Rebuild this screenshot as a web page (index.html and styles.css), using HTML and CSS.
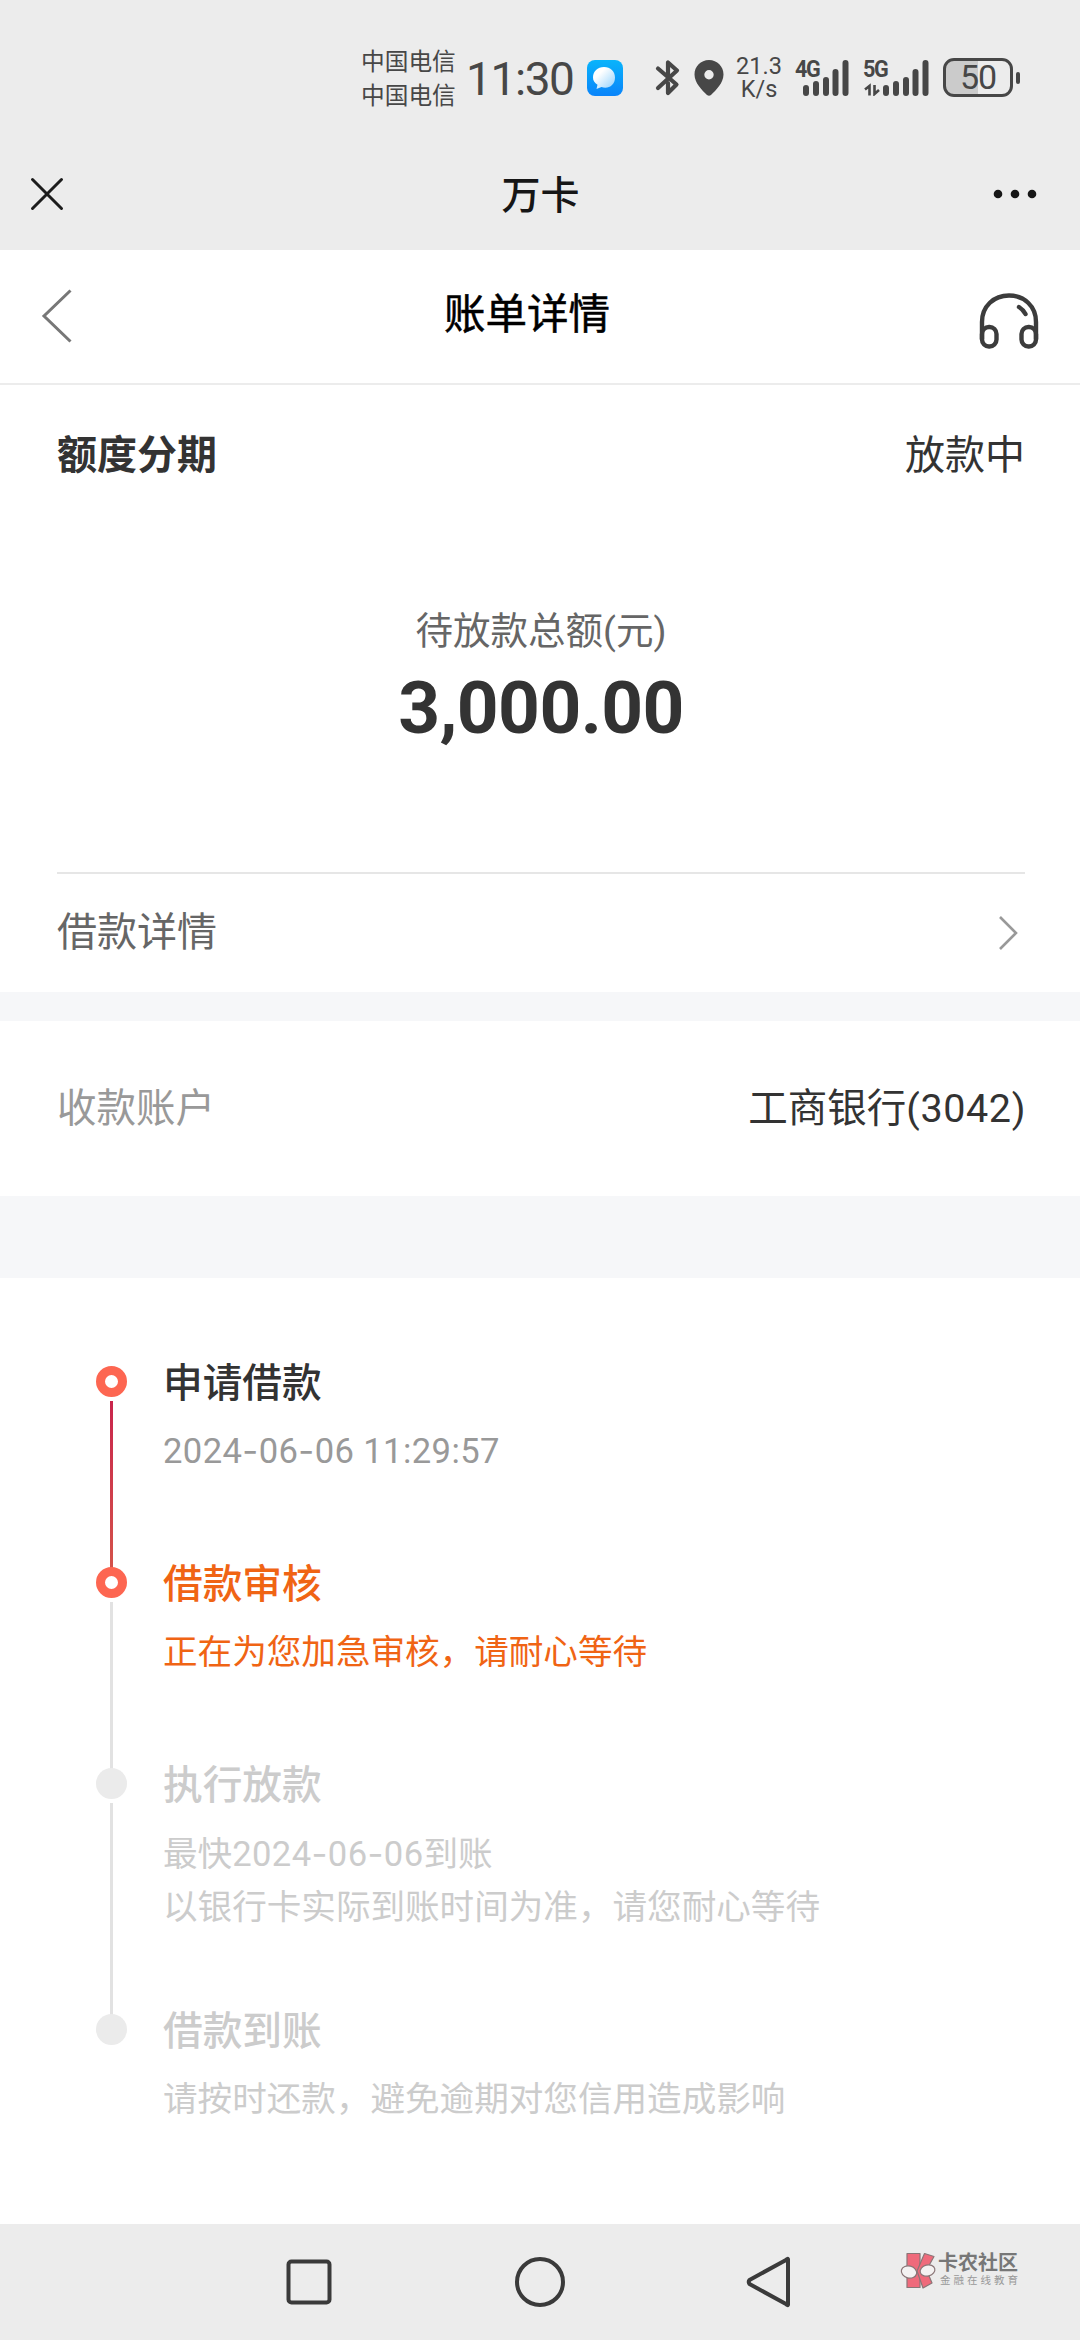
FILE: index.html
```html
<!DOCTYPE html>
<html lang="zh-CN">
<head>
<meta charset="utf-8">
<title>账单详情</title>
<link rel="stylesheet" href="styles.css">
</head>
<body>
<div class="screen">
  <header class="status">
    <div class="carriers"><span>中国电信</span><span>中国电信</span></div>
    <div class="clock">11:30</div>
    <svg class="chat" width="36" height="36" viewBox="0 0 36 36">
      <defs>
        <linearGradient id="sky" x1="0" y1="0" x2="0" y2="1"><stop offset="0" stop-color="#09b4fb"/><stop offset="1" stop-color="#0a84fa"/></linearGradient>
        <linearGradient id="bub" x1="0" y1="0" x2="1" y2="1"><stop offset="0.3" stop-color="#fff"/><stop offset="1" stop-color="#8fd0fd"/></linearGradient>
      </defs>
      <rect width="36" height="36" rx="8" fill="url(#sky)"/>
      <path d="M17 7c6.500 0 11 4.600 11 10.500 0 3-1 5.500-3 7.500-2.500 2.800-7 3.300-10.500 2L9.500 29l1-4.300C7.500 23 6 20.500 6 17.500 6 11.600 10.500 7 17 7z" fill="url(#bub)"/>
    </svg>
    <svg class="bluetooth" width="26" height="38" viewBox="0 0 26 38" fill="none" stroke="#474747" stroke-width="4.200" stroke-linejoin="round" stroke-linecap="round">
      <path d="M3 9.500 21.500 25.500 13 34V24M3 29 22 11.500 13 3.500V16"/>
    </svg>
    <svg class="pin" width="30" height="36" viewBox="0 0 30 36"><path fill="#474747" fill-rule="evenodd" d="M15 0c8.300 0 14.500 6.500 14.500 14.500C29.500 23 22 30 17 35q-2 1.500-4 0C8 30 .5 23 .5 14.500.5 6.500 6.700 0 15 0zm0 10a4.700 4.700 0 1 0 0 9.400 4.700 4.700 0 0 0 0-9.400z"/></svg>
    <div class="speed"><span>21.3</span><span>K/s</span></div>
    <div class="signal first">
      <span class="net">4G</span>
      <svg width="54" height="36" viewBox="0 0 54 36" stroke="#474747" stroke-width="6" stroke-linecap="round"><path d="M11 28v5M21 24v9M31 20v13M40.500 12v21M50.500 3v30"/></svg>
    </div>
    <div class="signal second">
      <span class="net">5G</span>
      <svg width="66" height="36" viewBox="0 0 66 36" stroke="#474747" stroke-width="6" stroke-linecap="round"><path d="M23 28v5M33 24v9M43 20v13M52.500 12v21M62.500 3v30"/><path d="M2 29.500 6.500 26v9.500M11.500 25v9L16 30" fill="none" stroke-width="2.600" stroke-linecap="butt"/></svg>
    </div>
    <div class="battery"><span>50</span></div><i class="nub"></i>
  </header>

  <div class="titlebar">
    <svg width="34" height="34" viewBox="0 0 34 34" stroke="#1c1c1c" stroke-width="3" stroke-linecap="round"><path d="M2.500 2.500l29 29M31.500 2.500l-29 29"/></svg>
    <h1>万卡</h1>
    <svg width="44" height="10" viewBox="0 0 44 10" fill="#161616"><circle cx="5" cy="5" r="4.300"/><circle cx="22" cy="5" r="4.300"/><circle cx="39" cy="5" r="4.300"/></svg>
  </div>

  <nav class="navbar">
    <svg class="back" width="32" height="54" viewBox="0 0 32 54" fill="none" stroke="#777" stroke-width="3"><path d="M29.500 1.500 3 27l26.500 25.500"/></svg>
    <h2>账单详情</h2>
    <svg class="support" width="60" height="56" viewBox="0 0 60 56" fill="none" stroke="#3c3c3c" stroke-width="4.400" stroke-linecap="round">
      <path d="M3 46V29C3 13 15 2.500 30 2.500S57 13 57 29v17"/>
      <rect x="3" y="34" width="14.500" height="19.500" rx="7"/><rect x="42.500" y="34" width="14.500" height="19.500" rx="7"/>
      <path d="M40 14q4 2.500 6.500 7"/>
    </svg>
  </nav>

  <section class="summary">
    <div class="row"><strong>额度分期</strong><span>放款中</span></div>
    <p class="label">待放款总额(元)</p>
    <p class="amount">3,000.00</p>
    <div class="detail"><span>借款详情</span>
      <svg width="22" height="36" viewBox="0 0 22 36" fill="none" stroke="#999" stroke-width="2.600"><path d="M2 2l16 16L2 34"/></svg>
    </div>
  </section>

  <section class="account"><span>收款账户</span><span class="bank">工商银行<span class="digits">(3042)</span></span></section>

  <ol class="timeline">
    <li class="done"><div class="rail"><i class="dot"></i><i class="line"></i></div>
      <div class="body"><h3>申请借款</h3><p class="time">2024<b>-</b>06<b>-</b>06 11:29:57</p></div></li>
    <li class="active"><div class="rail"><i class="dot"></i><i class="line"></i></div>
      <div class="body"><h3>借款审核</h3><p>正在为您加急审核，请耐心等待</p></div></li>
    <li class="todo tall"><div class="rail"><i class="dot"></i><i class="line"></i></div>
      <div class="body"><h3>执行放款</h3><p>最快<span class="time">2024<b>-</b>06<b>-</b>06</span>到账</p><p>以银行卡实际到账时间为准，请您耐心等待</p></div></li>
    <li class="todo"><div class="rail"><i class="dot"></i></div>
      <div class="body"><h3>借款到账</h3><p>请按时还款，避免逾期对您信用造成影响</p></div></li>
  </ol>

  <footer class="softkeys">
    <svg width="46" height="46" viewBox="0 0 46 46" fill="none" stroke="#3a3a3a" stroke-width="4"><rect x="2.500" y="2.500" width="41" height="41" rx="3"/></svg>
    <svg width="52" height="52" viewBox="0 0 52 52" fill="none" stroke="#3a3a3a" stroke-width="4"><circle cx="26" cy="26" r="23"/></svg>
    <svg width="46" height="52" viewBox="0 0 46 52" fill="none" stroke="#3a3a3a" stroke-width="4" stroke-linejoin="round"><path d="M42 3.500v45Q42 50 40 48L3.500 28Q2 26 3.500 24L40 4Q42 2 42 3.500z"/></svg>
    <div class="watermark">
      <svg width="36" height="38" viewBox="0 0 36 38" stroke="#8a7577" stroke-width="1.200" stroke-linejoin="round">
        <path fill="#ef6a7b" d="M7 1.500h13v34H7z"/>
        <path fill="#ef6a7b" d="M24.500 1.500 34 4.500 26.500 18 32 31l-9 5-6-17z"/>
        <ellipse cx="9" cy="20" rx="7.800" ry="6" fill="#f4f2f2" transform="rotate(15 9 20)"/><ellipse cx="27.500" cy="18.500" rx="7.500" ry="5.500" fill="#f4f2f2" transform="rotate(-15 27.500 18.500)"/>
      </svg>
      <div class="brand"><span>卡农社区</span><small>金融在线教育</small></div>
    </div>
  </footer>
</div>
</body>
</html>
```
FILE: styles.css
```css
* { box-sizing: border-box; margin: 0; padding: 0; }
body { background: #fff; color: #333; font-family: Roboto, "Noto Sans CJK SC", sans-serif; }
svg { display: block; flex: none; }
.screen { width: 1080px; height: 2340px; display: flex; flex-direction: column; overflow: hidden; }

.status { height: 138px; flex: none; background: #ececec; color: #474747; display: flex; align-items: flex-start; padding: 60px 60px 0 361px; }
.carriers { width: 96px; margin-top: -15px; display: flex; flex-direction: column; font-size: 23.700px; line-height: 34px; white-space: nowrap; }
.clock { width: 130px; padding-left: 9px; font-size: 46px; line-height: 38px; letter-spacing: -1.400px; }
.bluetooth { margin: -1px 0 0 32px; }
.pin { margin-left: 13px; }
.speed { width: 54px; margin: -5px 0 0 8px; display: flex; flex-direction: column; align-items: center; font-size: 23.500px; line-height: 23px; }
.signal { display: grid; height: 36px; }
.signal > * { grid-area: 1 / 1; }
.first { margin-left: 9px; }
.second { margin-left: 14px; }
.net { font-size: 24px; font-weight: 700; line-height: 18px; letter-spacing: -1.500px; transform: scaleX(.9); transform-origin: left; }
.battery { width: 70px; height: 39px; margin: -2px 0 0 14px; border: 3px solid #474747; border-radius: 11px; background: linear-gradient(90deg, #cbcbcb 50%, #ececec 50%); display: flex; justify-content: center; align-items: center; font-size: 34px; line-height: 33px; letter-spacing: -1px; }
.nub { width: 4px; height: 12px; margin: 12px 0 0 3px; border-radius: 2px; background: #474747; }

.titlebar { height: 112px; flex: none; background: #ececec; display: grid; grid-template-columns: 60px 1fr 60px; align-items: center; padding: 0 29px 0 30px; }
.titlebar h1 { margin-top: 3px; font-size: 39px; font-weight: 500; line-height: 56px; text-align: center; color: #161616; }
.titlebar svg:last-child { justify-self: end; margin-right: 14px; }

.navbar { height: 135px; flex: none; display: grid; grid-template-columns: 100px 1fr 100px; border-bottom: 2px solid #ececec; padding: 0 41px 0 41px; }
.navbar h2 { margin: 37px 26px 0 0; font-size: 41.500px; font-weight: 400; line-height: 56px; text-align: center; color: #000; -webkit-text-stroke: .5px #000; }
.back { margin-top: 39px; }
.support { justify-self: end; margin-top: 43px; }

.summary { height: 607px; flex: none; padding: 0 55px 0 57px; display: flex; flex-direction: column; }
.row { margin-top: 43px; display: flex; justify-content: space-between; font-size: 40px; line-height: 56px; }
.label { margin-top: 120px; font-size: 37.500px; line-height: 54px; text-align: center; color: #666; }
.amount { margin-top: 8px; font-size: 73px; font-weight: 700; line-height: 84px; letter-spacing: -.6px; text-align: center; }
.detail { margin-top: auto; height: 120px; border-top: 2px solid #e6e6e6; display: flex; justify-content: space-between; align-items: center; font-size: 40px; color: #666; padding-right: 5px; }
.detail span { margin-top: -8px; }

.account { height: 286px; flex: none; border-top: 29px solid #f6f7f9; border-bottom: 82px solid #f6f7f9; padding: 0 54px 8px 57px; display: flex; justify-content: space-between; align-items: center; font-size: 39.500px; color: #999; }
.bank { color: #333; }
.digits { letter-spacing: .6px; }

.timeline { list-style: none; flex: 1; padding: 84px 0 0 96px; }
.timeline li { display: flex; height: 201px; }
.timeline .tall { height: 246px; }
.rail { width: 67px; display: flex; flex-direction: column; padding-top: 4px; }
.dot { width: 31px; height: 31px; flex: none; border-radius: 50%; background: #ebebeb; }
.line { width: 3px; flex: 1; margin: 4px 0 -5px 14px; background: #e2e2e2; }
.done .dot, .active .dot { border: 9px solid #fd6651; background: #fff; }
.done .line { background: linear-gradient(#c9254c, #d4524a); }
.body h3 { margin: 2px 0 21px; font-size: 39.700px; font-weight: 500; line-height: 40px; }
.body p { font-size: 34.600px; line-height: 52.500px; color: #999; white-space: nowrap; }
.body p.time { margin-top: -1px; }
.time { letter-spacing: .4px; }
.time b { font-family: Inter, sans-serif; font-weight: 400; }
.active h3, .active .body p { color: #f06414; }
.todo h3, .todo .body p { color: #ccc; }

.softkeys { height: 116px; flex: none; background: #ececec; display: flex; align-items: center; padding: 0 62px 0 286px; position: relative; }
.softkeys svg:nth-child(2) { margin-left: 182px; }
.softkeys svg:nth-child(3) { margin-left: 180px; }
.watermark { position: absolute; left: 900px; top: 28px; display: flex; gap: 2px; }
.brand { display: flex; flex-direction: column; color: #777; }
.brand span { font-size: 20px; font-weight: 700; line-height: 22px; }
.brand small { font-size: 10.500px; line-height: 14px; letter-spacing: 3px; color: #999; padding-left: 2px; white-space: nowrap; }
```
